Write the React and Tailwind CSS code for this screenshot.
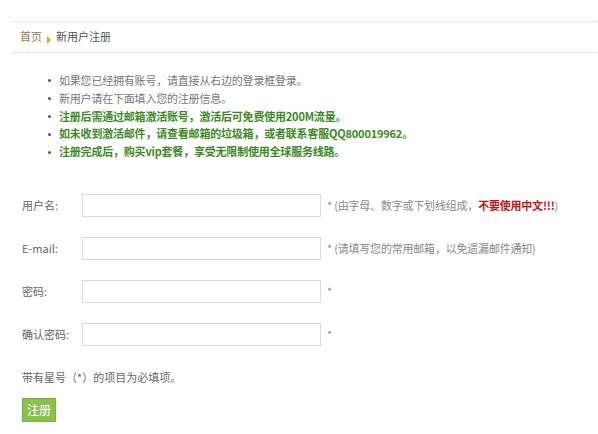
import React from 'react';

const notes = [
  { text: '如果您已经拥有账号，请直接从右边的登录框登录。', strong: false },
  { text: '新用户请在下面填入您的注册信息。', strong: false },
  { text: '注册后需通过邮箱激活账号，激活后可免费使用200M流量。', strong: true },
  { text: '如未收到激活邮件，请查看邮箱的垃圾箱，或者联系客服QQ800019962。', strong: true },
  { text: '注册完成后，购买vip套餐，享受无限制使用全球服务线路。', strong: true },
];

const fields = [
  { label: '用户名:', type: 'text', hint: 'name' },
  { label: 'E-mail:', type: 'text', hint: 'mail' },
  { label: '密码:', type: 'password' },
  { label: '确认密码:', type: 'password' },
];

const Hint = ({ kind }) => {
  if (kind === 'name') {
    return (
      <span>
        {' '}(由字母、数字或下划线组成，
        <b className="font-bold text-[#cc1111]">不要使用中文!!!</b>)
      </span>
    );
  }
  if (kind === 'mail') {
    return <span> (请填写您的常用邮箱，以免遗漏邮件通知)</span>;
  }
  return null;
};

const App = () => {
  return (
    <div className="w-[598px] h-[434px] bg-white overflow-hidden pt-[21px] pl-[12px] font-['Noto_Sans_CJK_SC',sans-serif] text-[11px] text-[#666]">
      {/* Breadcrumb */}
      <div className="h-[32px] border-y border-dotted border-[#d8d8d8] flex items-center pl-[8px] pb-[1px]">
        <span className="text-[#9a7a4c]">首页</span>
        <span className="mx-[5px] mt-[7px] w-0 h-0 border-y-[4px] border-y-transparent border-l-[4px] border-l-[#f0a020]" />
        <span className="text-[#555]">新用户注册</span>
      </div>

      {/* Notes */}
      <ul className="mt-[19px] pl-[36px] leading-[17.8px] tracking-[-0.2px]">
        {notes.map((n, i) => (
          <li key={i} className="flex items-center">
            <span className="w-[3px] h-[3px] rounded-full bg-[#555] mr-[8px]" />
            <span className={n.strong ? 'font-bold text-[#3a8a1e]' : 'text-[#777]'}>{n.text}</span>
          </li>
        ))}
      </ul>

      {/* Form */}
      <form className="mt-[33px] pl-[10px]" onSubmit={(e) => e.preventDefault()}>
        {fields.map((f, i) => (
          <div key={i} className="flex items-center h-[23px] mb-[20px]">
            <label className="w-[60px] text-[#666]">{f.label}</label>
            <input
              type={f.type}
              className="w-[239px] h-[23px] border border-[#dcdcdc] bg-white outline-none"
            />
            <span className="ml-[6px] text-[#888] whitespace-nowrap tracking-[-0.2px]">
              *<Hint kind={f.hint} />
            </span>
          </div>
        ))}

        <p className="mt-[23px] text-[#666]">带有星号（*）的项目为必填项。</p>

        <button
          type="submit"
          className="mt-[13px] w-[34px] h-[24px] bg-[#8cc152] border border-[#7db043] text-white text-[12px] leading-none"
        >
          注册
        </button>
      </form>
    </div>
  );
};

export default App;
